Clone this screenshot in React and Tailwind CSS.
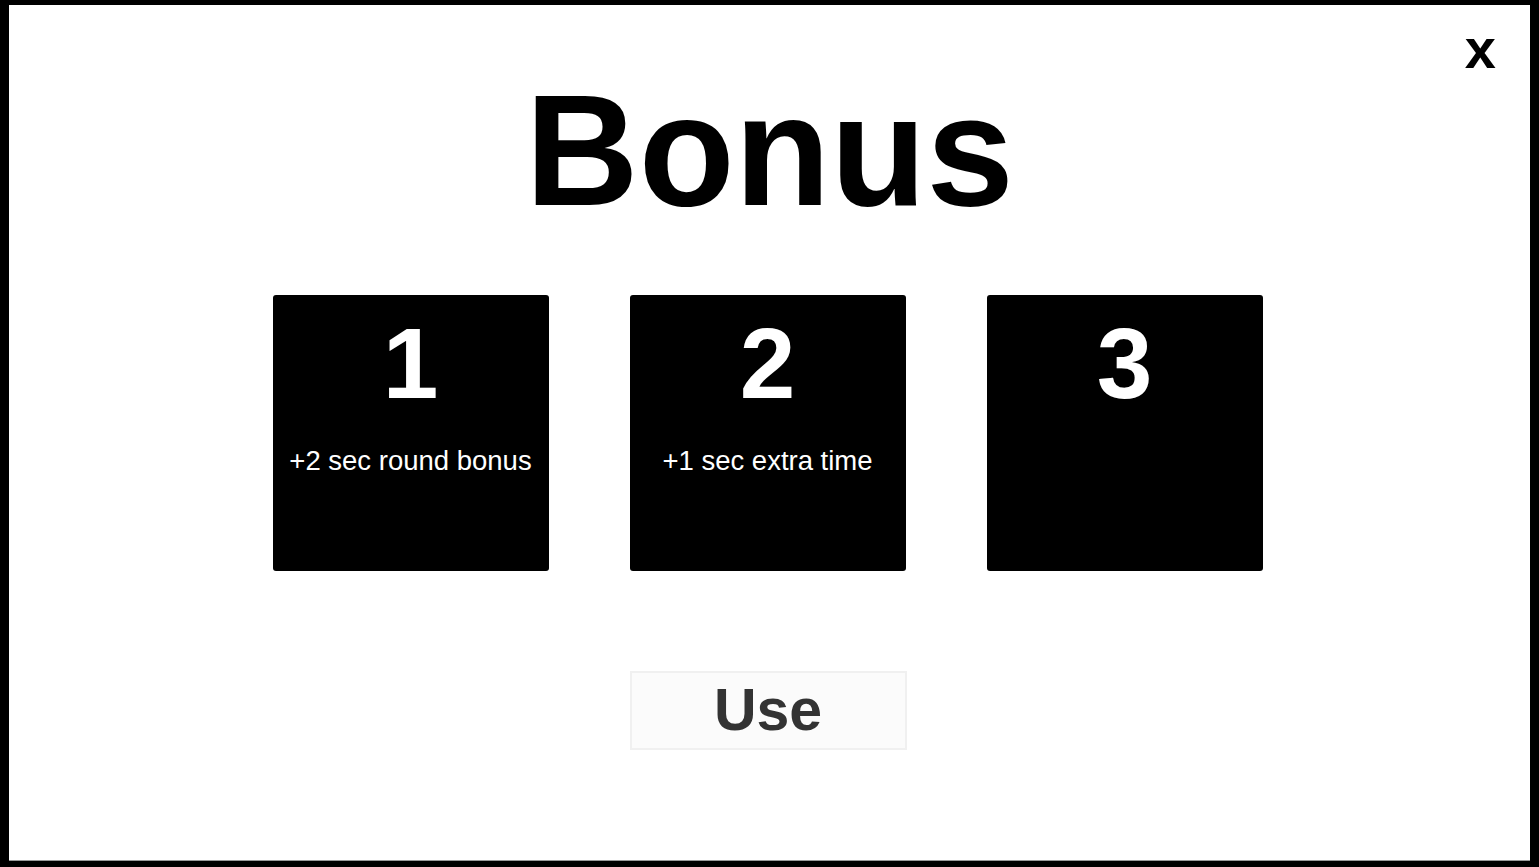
import React, { useState } from 'react';

const bonuses = [
    { id: 1, label: '+2 sec round bonus' },
    { id: 2, label: '+1 sec extra time' },
    { id: 3, label: '' },
];

const App = () => {
    const [selected, setSelected] = useState(null);

    return (
        <div className="h-screen w-full bg-black pt-[5px] pb-[6px] px-[9px] font-['Liberation_Sans',Arial,sans-serif]">
            <div className="relative h-full w-full bg-white flex flex-col items-center border-b border-[#9a9a9a]">
                <button
                    type="button"
                    className="absolute top-[16px] right-[34px] text-[56px] leading-none font-bold text-black"
                    aria-label="close"
                >
                    x
                </button>

                <h1 className="mt-[67px] text-[157px] leading-none font-bold text-black">Bonus</h1>

                <div className="mt-[66px] pr-[4px] flex gap-[81px]">
                    {bonuses.map((b) => (
                        <div
                            key={b.id}
                            onClick={() => setSelected(b.id)}
                            className="w-[276px] h-[276px] bg-black rounded-[3px] flex flex-col items-center pt-[18px] text-white cursor-pointer"
                        >
                            <span className="text-[100px] leading-none font-bold">{b.id}</span>
                            <span className="mt-[34px] text-[27.5px] leading-none">{b.label}</span>
                        </div>
                    ))}
                </div>

                <div className="mt-[100px] pr-[3px]">
                    <button
                        type="button"
                        disabled={selected === null}
                        className="w-[277px] h-[79px] bg-[#fbfbfb] border-2 border-[#f0f0f0] flex items-center justify-center text-[59px] leading-none font-bold text-[#333333]"
                    >
                        Use
                    </button>
                </div>
            </div>
        </div>
    );
};

export default App;
